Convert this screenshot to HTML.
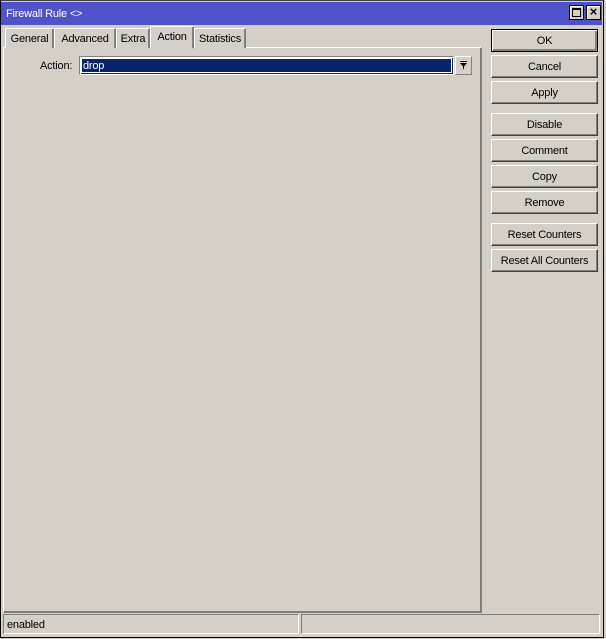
<!DOCTYPE html>
<html><head><style>
*{box-sizing:border-box;margin:0;padding:0}
body{width:606px;height:639px;background:#d4d0c8;font-family:"Liberation Sans",sans-serif;font-size:11px;letter-spacing:-0.2px;color:#000;position:relative;overflow:hidden}
.a{position:absolute}
.win{left:0;top:0;width:604px;height:638px;border:1px solid #000;border-top-color:#404040;background:#d4d0c8}
.title{left:1px;top:2px;width:601px;height:23px;background:#4f52c8;color:#fff;padding:6px 0 0 5px}
.tb{top:5px;width:15px;height:15px;background:#d4d0c8;border:1px solid #000;box-shadow:inset 1px 1px #fff}
.tab{top:28px;height:20px;padding-top:4px;text-align:center;background:#d4d0c8;border:1px solid #fff;border-right-color:#808080;border-bottom:none;box-shadow:inset -1px 0 #808080}
.tab.sel{top:26px;height:23px;z-index:2;padding-top:4px}
.panel{left:3px;top:47px;width:479px;height:566px;border:1px solid #fff;border-right-color:#808080;border-bottom-color:#808080;box-shadow:inset -1px -1px #808080}
.btn{left:491px;width:107px;height:23px;background:#d4d0c8;border:1px solid #fff;border-right-color:#404040;border-bottom-color:#404040;box-shadow:inset -1px -1px #808080;text-align:center;padding-top:5px}
.ok{border:1px solid #000;box-shadow:inset 1px 1px #fff,inset -2px -2px #808080}
.sb{top:614px;height:20px;border:1px solid #808080;border-right-color:#fff;border-bottom-color:#fff;padding:4px 0 0 3px}
</style></head><body>
<div class="a win"></div>
<div class="a title">Firewall Rule &lt;&gt;</div>
<div class="a tb" style="left:569px"><div class="a" style="left:2px;top:2px;width:9px;height:9px;border:1px solid #000;border-top-width:2px"></div></div>
<div class="a tb" style="left:586px;font-weight:bold;font-size:13px;line-height:12px;text-align:center">×</div>
<div class="a panel"></div>
<div class="a tab" style="left:5px;width:49px">General</div>
<div class="a tab" style="left:54px;width:62px">Advanced</div>
<div class="a tab" style="left:116px;width:34px">Extra</div>
<div class="a tab sel" style="left:150px;width:44px;border-bottom:1px solid #d4d0c8">Action</div>
<div class="a tab" style="left:194px;width:52px">Statistics</div>
<div class="a" style="left:40px;top:60px">Action:</div>
<div class="a" style="left:79px;top:56px;width:375px;height:19px;border:1px solid #808080;border-right-color:#fff;border-bottom-color:#fff;background:#0a246a;box-shadow:inset 1px 1px #fff"><div class="a" style="left:1px;top:1px;right:1px;bottom:1px;border:1px solid #fff;"></div><span class="a" style="left:3px;top:3px;color:#fff">drop</span></div>
<div class="a" style="left:455px;top:56px;width:17px;height:19px;border:1px solid #fff;border-right-color:#808080;border-bottom-color:#808080;background:#d4d0c8">
<svg class="a" style="left:3px;top:4px" width="9" height="9"><rect x="1" y="0" width="7" height="1" fill="#000"/><path d="M1 2H8L4.5 6Z" fill="#000"/><rect x="4" y="5" width="1" height="3" fill="#000"/></svg></div>
<div class="a btn ok" style="top:29px">OK</div>
<div class="a btn" style="top:55px">Cancel</div>
<div class="a btn" style="top:81px">Apply</div>
<div class="a btn" style="top:113px">Disable</div>
<div class="a btn" style="top:139px">Comment</div>
<div class="a btn" style="top:165px">Copy</div>
<div class="a btn" style="top:191px">Remove</div>
<div class="a btn" style="top:223px">Reset Counters</div>
<div class="a btn" style="top:249px">Reset All Counters</div>
<div class="a sb" style="left:3px;width:296px">enabled</div>
<div class="a sb" style="left:301px;width:299px"></div>
</body></html>
